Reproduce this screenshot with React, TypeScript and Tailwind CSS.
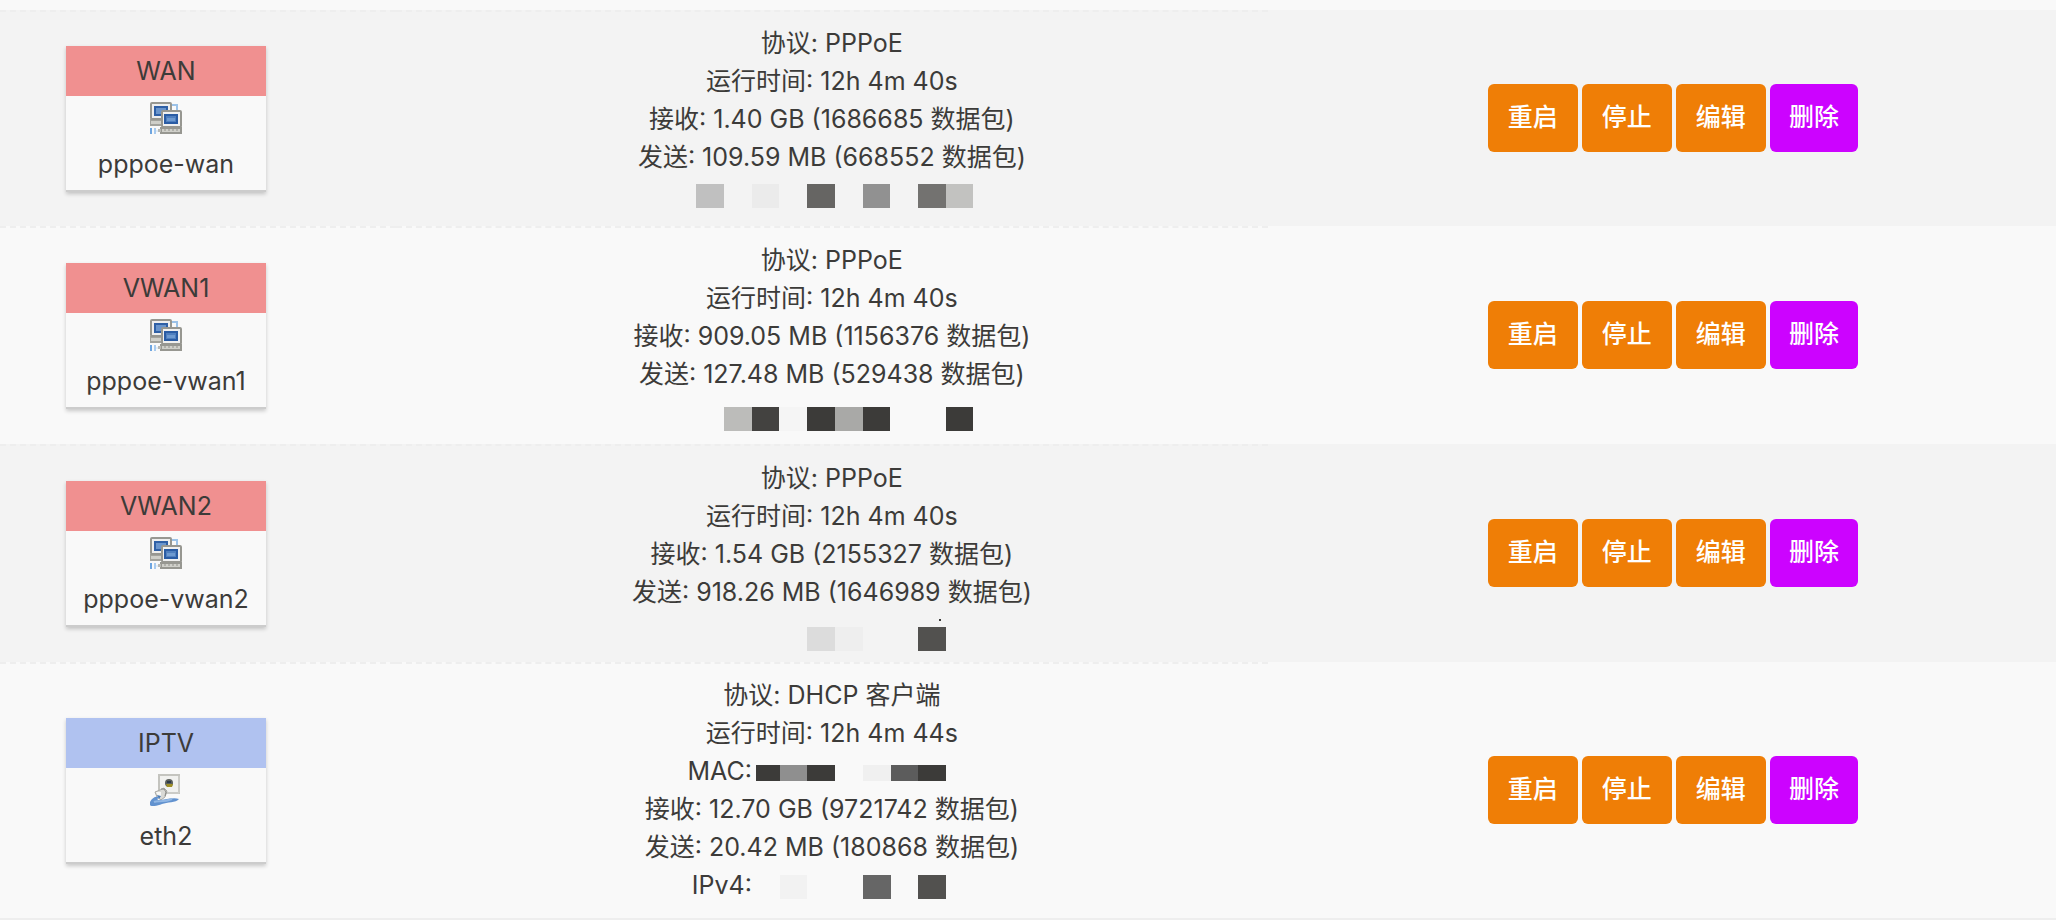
import clsx from "clsx";

type Iface = {
  name: string;
  device: string;
  kind: "tunnel" | "ethernet";
  protocol: string;
  uptime: string;
  rx: string;
  tx: string;
};

const interfaces: Iface[] = [
  { name: "WAN", device: "pppoe-wan", kind: "tunnel", protocol: "PPPoE", uptime: "12h 4m 40s", rx: "1.40 GB (1686685 数据包)", tx: "109.59 MB (668552 数据包)" },
  { name: "VWAN1", device: "pppoe-vwan1", kind: "tunnel", protocol: "PPPoE", uptime: "12h 4m 40s", rx: "909.05 MB (1156376 数据包)", tx: "127.48 MB (529438 数据包)" },
  { name: "VWAN2", device: "pppoe-vwan2", kind: "tunnel", protocol: "PPPoE", uptime: "12h 4m 40s", rx: "1.54 GB (2155327 数据包)", tx: "918.26 MB (1646989 数据包)" },
  { name: "IPTV", device: "eth2", kind: "ethernet", protocol: "DHCP 客户端", uptime: "12h 4m 44s", rx: "12.70 GB (9721742 数据包)", tx: "20.42 MB (180868 数据包)" },
];

const none = "bg-transparent";

function TunnelIcon() {
  return (
    <svg className="size-8" viewBox="0 0 32 32" aria-hidden="true">
      <path d="M22 3h5v6" fill="none" stroke="#9cc2e8" strokeWidth="2" />
      <path d="M0 17h12v7H0z" fill="#a3a39d" />
      <path d="M1 19h10v3H1z" fill="#cfcfc9" />
      <rect x="1" y="1" width="20" height="16" rx="1" fill="#eeeeee" stroke="#979791" strokeWidth="2" />
      <rect x="4" y="4" width="14" height="10" fill="#2f60a6" />
      <rect x="6" y="6" width="10" height="6" fill="#6a95cc" />
      <path d="M10 25h22v7H10z" fill="#979791" />
      <path d="M12 27h18v3H12z" fill="#cfcfc9" />
      <path d="M14 28h2m2 0h2m2 0h2m2 0h2" stroke="#b0b0aa" strokeWidth="2" />
      <path d="M8 27h3v3H8z" fill="#b9b9b4" />
      <rect x="12" y="9" width="19" height="16" rx="1" fill="#f0f0f0" stroke="#979791" strokeWidth="2" />
      <rect x="14" y="12" width="14" height="10" fill="#2a5ca4" />
      <rect x="16" y="14" width="10" height="6" fill="#4f7fbf" />
      <path d="M17 16h8v3h-8z" fill="#6e9ad0" />
      <path d="M0 26h2v6H0z" fill="#6ea5e0" />
      <path d="M4 26h2v6H4z" fill="#a9cbee" />
      <path d="M6 28h2v2H6z" fill="#e0ecf8" />
    </svg>
  );
}

function EthernetIcon() {
  return (
    <svg className="size-8" viewBox="0 0 32 32" aria-hidden="true">
      <rect x="9" y="1" width="20" height="18" fill="#f1f1ef" stroke="#c4c4bf" strokeWidth="2" />
      <path d="M10 19h19V2" fill="none" stroke="#d2d2ce" strokeWidth="1" />
      <circle cx="19" cy="9" r="4" fill="#5a5e5b" />
      <path d="M16 10h7l-1 3h-5z" fill="#a09026" />
      <path d="M17 7h4v2h-4z" fill="#2d3a48" />
      <path d="M10 16l4-2 3 3-2 6-4 3-4-3-2-5z" fill="#d9d9d5" stroke="#a9a9a4" strokeWidth="1" />
      <path d="M11 15h3l2 3-1 4" fill="none" stroke="#8b8b87" strokeWidth="1" />
      <path d="M6 18h5v4H8z" fill="#f7f7f5" />
      <path d="M7 21l4 1-2 3z" fill="#4b7ab3" />
      <path d="M0 28c2-4 5-6 9-5-2 2-2 3 0 3 7 0 14-3 20-1-3 4-12 3-17 5-5 2-11 3-12 1z" fill="#6292cf" />
      <path d="M4 28c4-2 9 1 18-3" fill="none" stroke="#91b7e4" strokeWidth="2" />
    </svg>
  );
}

function Blocks({ cells, className }: { cells: string[]; className: string }) {
  return (
    <span className={clsx("grid", className)}>
      {cells.map((cell, i) => (
        <span key={i} className={cell} />
      ))}
    </span>
  );
}

function Address({ name }: { name: string }) {
  if (name === "WAN") {
    return (
      <div className="flex h-[38px] items-center justify-center pt-0.5 pl-1.5">
        <Blocks
          className="h-6 w-[277px] grid-cols-10"
          cells={["bg-[#c0c0c0]", none, "bg-[#ebebeb]", none, "bg-[#666563]", none, "bg-[#919191]", none, "bg-[#737270]", "bg-[#c2c2c0]"]}
        />
      </div>
    );
  }
  if (name === "VWAN1") {
    return (
      <div className="flex h-[38px] items-end justify-center pl-1.5">
        <Blocks
          className="h-6 w-[277px] grid-cols-10"
          cells={[none, "bg-[#bcbcba]", "bg-[#434240]", "bg-[#f5f5f5]", "bg-[#3c3b39]", "bg-[#a9a9a7]", "bg-[#3c3b39]", none, none, "bg-[#3c3b39]"]}
        />
      </div>
    );
  }
  return (
    <div className="flex h-[38px] flex-col items-center pt-2 pl-1.5">
      <span className="flex w-[277px] shrink-0 justify-end pr-8">
        <span className="h-0.5 w-0.5 bg-[#3c3b39]" />
      </span>
      <Blocks
        className="mt-1.5 h-6 w-[277px] shrink-0 grid-cols-10"
        cells={[none, none, none, none, "bg-[#dcdcdc]", "bg-[#eeeeee]", none, none, "bg-[#52514f]", none]}
      />
    </div>
  );
}

function IfaceBox({ iface }: { iface: Iface }) {
  return (
    <div className="mx-auto w-[200px] border-b-2 border-[#cccccc] bg-[#f9f9f9] shadow-[0_2px_4px_rgba(0,0,0,0.2)]">
      <div className={clsx("h-[50px] leading-[50px]", iface.kind === "tunnel" ? "bg-[#f09090]" : "bg-[#b0c2f0]")}>
        {iface.name}
      </div>
      <div className="flex h-[94px] flex-col items-center gap-[11px] pt-[6px]">
        {iface.kind === "tunnel" ? <TunnelIcon /> : <EthernetIcon />}
        <span className="leading-[38px]">{iface.device}</span>
      </div>
    </div>
  );
}

function IfaceStatus({ iface }: { iface: Iface }) {
  const ethernet = iface.kind === "ethernet";
  return (
    <div className={clsx("leading-[38px]", ethernet && "pb-0.5")}>
      <div>协议: {iface.protocol}</div>
      <div>运行时间: {iface.uptime}</div>
      {ethernet && (
        <div className="flex h-[38px] items-center justify-center">
          <span className="min-w-[68px] text-right">MAC:</span>
          <Blocks
            className="mt-1 mr-[6px] h-4 w-[222px] grid-cols-8"
            cells={["ml-1 bg-[#3c3b39]", "bg-[#8f8f8f]", "bg-[#3c3b39]", none, "bg-[#f0f0f0]", "bg-[#5c5c5c]", "bg-[#3c3b39]", none]}
          />
        </div>
      )}
      <div>接收: {iface.rx}</div>
      <div>发送: {iface.tx}</div>
      {ethernet ? (
        <div className="flex h-[38px] items-center justify-center">
          <span className="min-w-[68px] text-right">IPv4:</span>
          <Blocks
            className="mt-1 mr-[6px] h-6 w-[222px] grid-cols-8"
            cells={[none, "bg-[#f2f2f2]", none, none, "bg-[#666666]", none, "bg-[#52514f]", none]}
          />
        </div>
      ) : (
        <Address name={iface.name} />
      )}
    </div>
  );
}

function Actions() {
  const button = "h-[68px] rounded-md font-medium text-white";
  return (
    <div className="flex justify-center gap-1 pl-[22px]">
      <button type="button" className={clsx(button, "bg-[#ef7e06] px-5")}>重启</button>
      <button type="button" className={clsx(button, "bg-[#ef7e06] px-5")}>停止</button>
      <button type="button" className={clsx(button, "bg-[#ef7e06] px-5")}>编辑</button>
      <button type="button" className={clsx(button, "bg-[#cc03ff] px-[19px]")}>删除</button>
    </div>
  );
}

export default function App() {
  return (
    <main className="bg-[#f9f9f9] pt-[10px] font-[Inter,'Noto_Sans_CJK_SC',sans-serif] text-[25px] text-[#3c3b39]">
      <table className="w-full table-fixed border-separate border-spacing-0 border-b-2 border-[#eeeeee] text-center">
        <colgroup>
          <col className="w-[396px]" />
          <col className="w-[42.4%]" />
          <col />
        </colgroup>
        <tbody>
          {interfaces.map((iface) => (
            <tr key={iface.name} className="h-[218px] odd:bg-[#f3f3f3] first:h-[216px] last:h-[256px]">
              <td className="border-t-2 border-dashed border-[#eeeeee] pr-16 align-middle">
                <IfaceBox iface={iface} />
              </td>
              <td className="border-t-2 border-dashed border-[#eeeeee] align-middle">
                <IfaceStatus iface={iface} />
              </td>
              <td className="align-middle">
                <Actions />
              </td>
            </tr>
          ))}
        </tbody>
      </table>
    </main>
  );
}
